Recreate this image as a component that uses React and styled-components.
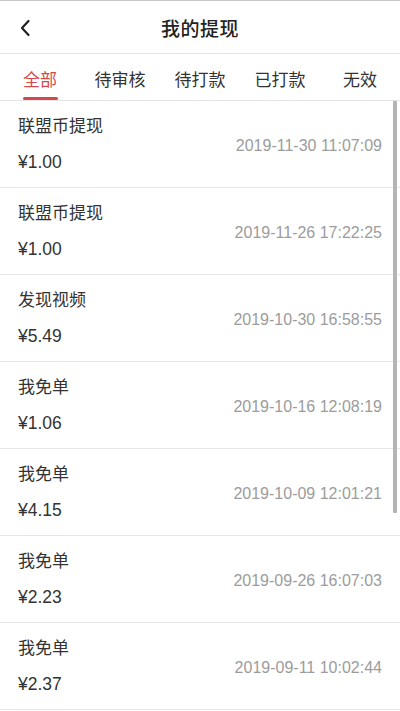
import React from 'react'
import styled, { createGlobalStyle } from 'styled-components'

const GlobalStyle = createGlobalStyle`
  html, body {
    margin: 0;
    padding: 0;
    background: #fff;
    font-family: "Liberation Sans", "Noto Sans CJK SC", sans-serif;
  }
  * { box-sizing: border-box; }
`

const records = [
  { title: '联盟币提现', amount: '¥1.00', time: '2019-11-30 11:07:09' },
  { title: '联盟币提现', amount: '¥1.00', time: '2019-11-26 17:22:25' },
  { title: '发现视频', amount: '¥5.49', time: '2019-10-30 16:58:55' },
  { title: '我免单', amount: '¥1.06', time: '2019-10-16 12:08:19' },
  { title: '我免单', amount: '¥4.15', time: '2019-10-09 12:01:21' },
  { title: '我免单', amount: '¥2.23', time: '2019-09-26 16:07:03' },
  { title: '我免单', amount: '¥2.37', time: '2019-09-11 10:02:44' },
]

const tabs = ['全部', '待审核', '待打款', '已打款', '无效']

export default function App() {
  return (
    <Page>
      <GlobalStyle />
      <Header>
        <BackButton>
          <svg width="12" height="18" viewBox="0 0 12 18">
            <path d="M9.5 2 L3 9 L9.5 16" fill="none" stroke="#222" strokeWidth="2.2" strokeLinecap="round" strokeLinejoin="round" />
          </svg>
        </BackButton>
        <Title>我的提现</Title>
      </Header>
      <Tabs>
        {tabs.map((t, i) => (
          <Tab key={t} active={i === 0}>{t}</Tab>
        ))}
      </Tabs>
      <List>
        {records.map((r, i) => (
          <Row key={i}>
            <Info>
              <ItemTitle>{r.title}</ItemTitle>
              <Amount>{r.amount}</Amount>
            </Info>
            <Time>{r.time}</Time>
          </Row>
        ))}
        <ScrollBar />
      </List>
    </Page>
  )
}

const Page = styled.div`
  width: 400px;
  height: 711px;
  overflow: hidden;
  background: #fff;
  border-top: 1px solid #c8c8c8;
`

const Header = styled.div`
  height: 53px;
  display: flex;
  align-items: center;
  justify-content: center;
  position: relative;
  border-bottom: 1px solid #e4e4e6;
`

const BackButton = styled.div`
  position: absolute;
  left: 19px;
  top: 18px;
  display: flex;
`

const Title = styled.div`
  font-size: 19px;
  color: #222;
  font-weight: 500;
  letter-spacing: 0.5px;
`

const Tabs = styled.div`
  display: grid;
  grid-template-columns: repeat(5, 1fr);
  height: 47px;
  border-bottom: 1px solid #e4e4e6;
`

const Tab = styled.div`
  position: relative;
  display: flex;
  align-items: center;
  justify-content: center;
  font-size: 17px;
  color: ${p => (p.active ? '#d0494c' : '#333')};
  padding-top: 2px;

  &::after {
    content: '';
    display: ${p => (p.active ? 'block' : 'none')};
    position: absolute;
    left: 50%;
    bottom: 0;
    width: 35px;
    height: 3px;
    margin-left: -17px;
    border-radius: 2px;
    background: #d0494c;
  }
`

const List = styled.div`
  position: relative;
`

const Row = styled.div`
  height: 87px;
  display: flex;
  align-items: center;
  justify-content: space-between;
  padding: 0 18px;
  border-bottom: 1px solid #e6e6e8;
`

const Info = styled.div`
  display: flex;
  flex-direction: column;
  gap: 11px;
`

const ItemTitle = styled.div`
  font-size: 17px;
  line-height: 24px;
  color: #333;
`

const Amount = styled.div`
  font-size: 17.5px;
  line-height: 24px;
  color: #333;
`

const Time = styled.div`
  font-size: 16px;
  color: #9c9c9c;
  padding-top: 3px;
`

const ScrollBar = styled.div`
  position: absolute;
  right: 3px;
  top: 0;
  width: 4px;
  height: 412px;
  background: #b4b4b4;
  border-radius: 1px;
`
